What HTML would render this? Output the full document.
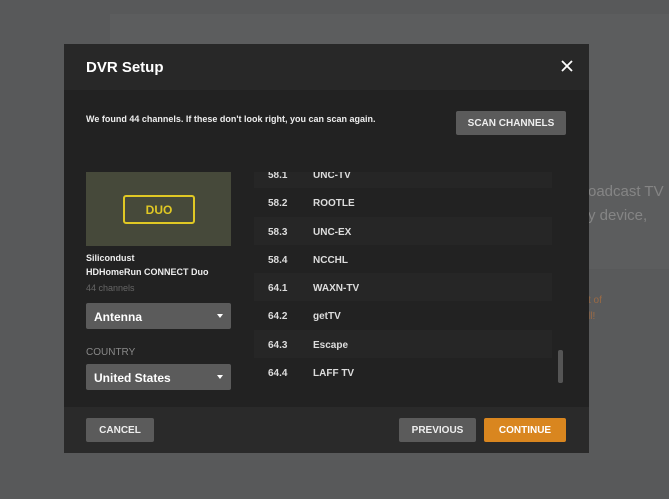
<!DOCTYPE html>
<html><head><style>
*{margin:0;padding:0;box-sizing:border-box}
body{width:669px;height:499px;overflow:hidden;background:#58595a;font-family:"Liberation Sans",sans-serif;position:relative}
.bg1{position:absolute;left:110px;top:14px;width:559px;height:255px;background:#5c5d5e}
.bg2{position:absolute;left:110px;top:270px;width:559px;height:190px;background:#595a5b}
.bgt{position:absolute;color:#858585;font-size:15px}
.m{position:absolute;left:64px;top:44px;width:525px;height:409px;background:#222}
.hd{position:absolute;left:0;top:0;width:525px;height:46px;background:#282828}
.hd h1{position:absolute;left:22px;top:15px;font-size:15px;color:#fff;font-weight:bold}
.x{position:absolute;right:16px;top:16px;width:12px;height:12px}
.ft{position:absolute;left:0;top:363px;width:525px;height:46px;background:#2a2a2a}
.t{position:absolute;color:#eee;font-size:9px;font-weight:bold;white-space:nowrap}
.btn{position:absolute;background:#5b5b5b;color:#eee;font-size:10px;font-weight:bold;text-align:center;border-radius:2px}
.sel{position:absolute;left:22px;width:145px;height:26px;background:#5b5b5b;border-radius:2px;color:#fff;font-size:12px;font-weight:bold;padding:7px 0 0 8px}
.sel:after{content:"";position:absolute;right:8px;top:11px;border:3px solid transparent;border-top:4px solid #fff}
.list{position:absolute;left:190px;top:128px;width:312px;height:214px;overflow:hidden}
.row{height:28.3px;width:298px;color:#ddd;font-size:10px;font-weight:bold;position:relative}
.row:nth-child(odd){background:#262626}
.row span{position:absolute;top:10px}
</style></head><body>
<div class="bg1"></div><div class="bg2"></div>
<div class="bgt" style="left:588px;top:183px">oadcast TV</div>
<div class="bgt" style="left:588px;top:207px">y device,</div>
<div class="bgt" style="left:588px;top:295px;font-size:10px;color:#9a6a45">t of</div>
<div class="bgt" style="left:588px;top:311px;font-size:10px;color:#9a6a45">ll!</div>
<div class="m">
<div class="hd"><h1>DVR Setup</h1>
<svg class="x" viewBox="0 0 12 12"><path d="M1 1L11 11M11 1L1 11" stroke="#fff" stroke-width="1.8"/></svg></div>
<div class="t" style="left:22px;top:70px">We found 44 channels. If these don't look right, you can scan again.</div>
<div class="btn" style="left:392px;top:67px;width:110px;height:24px;padding-top:7px">SCAN CHANNELS</div>
<div style="position:absolute;left:22px;top:128px;width:145px;height:74px;background:#46493a">
<div style="position:absolute;left:37px;top:23px;width:72px;height:29px;border:2px solid #e0c824;border-radius:3px;color:#e0c824;font-size:12px;font-weight:bold;text-align:center;padding-top:6px">DUO</div></div>
<div class="t" style="left:22px;top:209px">Silicondust</div>
<div class="t" style="left:22px;top:223px">HDHomeRun CONNECT Duo</div>
<div class="t" style="left:22px;top:239px;color:#666;font-weight:normal">44 channels</div>
<div class="sel" style="top:259px">Antenna</div>
<div class="t" style="left:22px;top:303px;color:#888;font-size:10px;font-weight:normal">COUNTRY</div>
<div class="sel" style="top:320px">United States</div>
<div class="list">
<div style="margin-top:-12px">
<div class="row"><span style="left:14px">58.1</span><span style="left:59px">UNC-TV</span></div>
<div class="row"><span style="left:14px">58.2</span><span style="left:59px">ROOTLE</span></div>
<div class="row"><span style="left:14px">58.3</span><span style="left:59px">UNC-EX</span></div>
<div class="row"><span style="left:14px">58.4</span><span style="left:59px">NCCHL</span></div>
<div class="row"><span style="left:14px">64.1</span><span style="left:59px">WAXN-TV</span></div>
<div class="row"><span style="left:14px">64.2</span><span style="left:59px">getTV</span></div>
<div class="row"><span style="left:14px">64.3</span><span style="left:59px">Escape</span></div>
<div class="row"><span style="left:14px">64.4</span><span style="left:59px">LAFF TV</span></div>
</div>
<div style="position:absolute;left:304px;top:178px;width:5px;height:33px;background:#555;border-radius:2px"></div>
</div>
<div class="ft">
<div class="btn" style="left:22px;top:11px;width:68px;height:24px;padding-top:7px">CANCEL</div>
<div class="btn" style="left:335px;top:11px;width:77px;height:24px;padding-top:7px">PREVIOUS</div>
<div class="btn" style="left:420px;top:11px;width:82px;height:24px;padding-top:7px;background:#d9861f;color:#fff">CONTINUE</div>
</div>
</div>
</body></html>
